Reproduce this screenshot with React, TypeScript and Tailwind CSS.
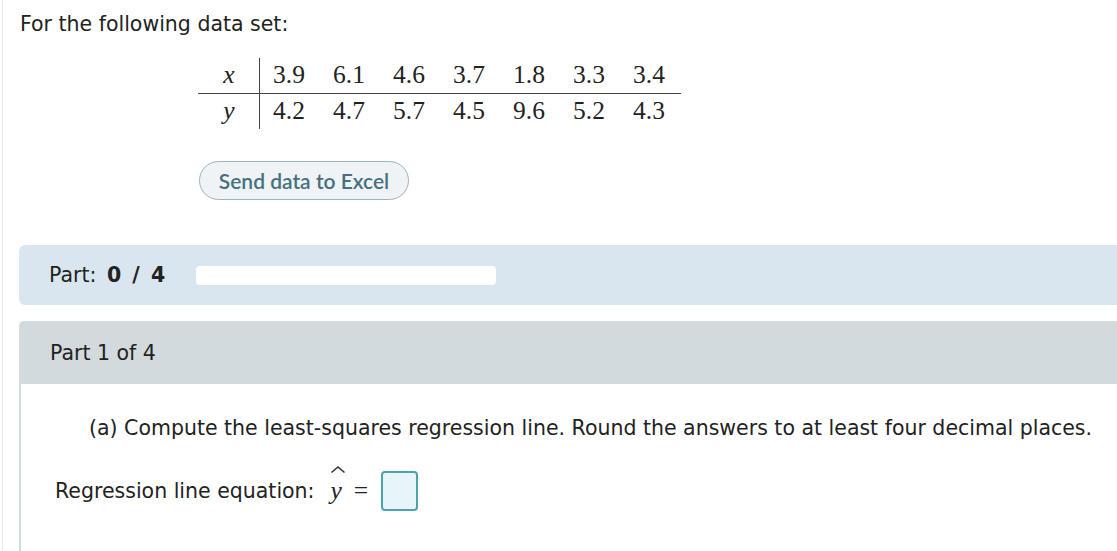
import React from "react";

const xs = ["3.9", "6.1", "4.6", "3.7", "1.8", "3.3", "3.4"];
const ys = ["4.2", "4.7", "5.7", "4.5", "9.6", "5.2", "4.3"];

export default function App() {
  const sans = { fontFamily: '"DejaVu Sans", Verdana, sans-serif' };
  const serif = { fontFamily: '"Liberation Serif", "Times New Roman", serif' };
  return (
    <div className="w-[1117px] h-[551px] overflow-hidden bg-white text-[#222]" style={sans}>
      <div className="ml-[2px] h-full border-l border-[#e3e9ec] pl-[16px]">
        <div className="pt-[10px] text-[20.5px] leading-[28px] pl-[1px]">For the following data set:</div>

        <div className="mt-[20px] ml-[179px] text-[25.5px]" style={serif}>
          <div className="flex h-[36px] items-center border-b border-[#444] w-[483px]">
            <div className="w-[62px] h-full flex items-center justify-center border-r border-[#444] italic pl-[1px]">x</div>
            {xs.map((v, i) => (
              <div key={i} className="w-[60px] pl-[13px]">{v}</div>
            ))}
          </div>
          <div className="flex h-[35px] items-center w-[483px]">
            <div className="w-[62px] h-full flex items-center justify-center border-r border-[#444] italic pl-[1px]">y</div>
            {ys.map((v, i) => (
              <div key={i} className="w-[60px] pl-[13px]">{v}</div>
            ))}
          </div>
        </div>

        <div className="mt-[32px] ml-[180px]">
          <div
            className="w-[210px] h-[39px] rounded-full border border-[#9db3bd] bg-[#eff3f5] flex items-center justify-center text-[21px] font-semibold text-[#46707f]"
            style={{ fontFamily: 'Lato, "Open Sans", sans-serif' }}
          >
            Send data to Excel
          </div>
        </div>

        <div className="mt-[45px] h-[60px] rounded-l-[6px] bg-[#dae6ef] flex items-center pl-[30px]">
          <span className="text-[20.5px]">
            Part: <span className="ml-[4px] font-bold tracking-[2px]">0 / 4</span>
          </span>
          <div className="ml-[29px] w-[300px] h-[19px] rounded-[4px] bg-white" />
        </div>

        <div className="mt-[16px] border-t-2 border-l-2 border-[#d3dbdf] rounded-tl-[5px] h-[240px]">
          <div className="h-[61px] bg-[#d2dadd] flex items-center pl-[29px] text-[20.5px]">Part 1 of 4</div>
          <div className="pl-[68px] pt-[30px] text-[20.5px] leading-[28px]">
            (a) Compute the least-squares regression line. Round the answers to at least four decimal places.
          </div>
          <div className="pl-[34px] pt-[29px] flex items-center text-[20.5px]">
            <span>Regression line equation:</span>
            <span className="relative ml-[16px] italic text-[25.5px] leading-[28px]" style={serif}>
              <span className="absolute left-[-1px] top-[-12px]">
                <svg width="16" height="9" viewBox="0 0 16 9">
                  <path d="M1.5 7.5 L8 2 L14.5 7.5" fill="none" stroke="#333" strokeWidth="1.6" />
                </svg>
              </span>
              y
            </span>
            <span className="ml-[12px] text-[25.5px] leading-[28px]" style={serif}>=</span>
            <div className="ml-[13px] w-[37px] h-[40px] rounded-[4px] border-2 border-[#4ba2b2] bg-[#e7f5f9]" />
          </div>
        </div>
      </div>
    </div>
  );
}
